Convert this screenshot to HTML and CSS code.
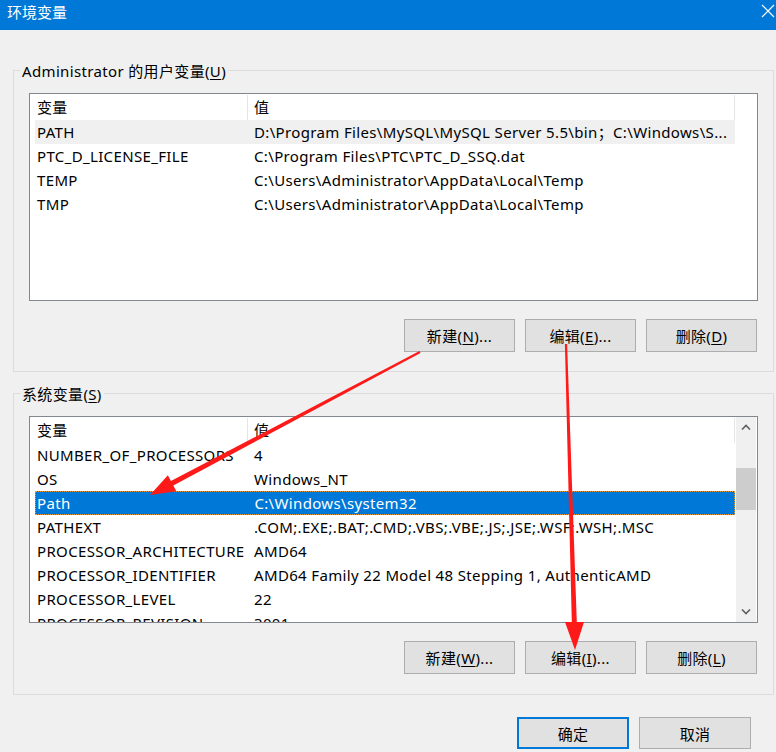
FILE: index.html
```html
<!DOCTYPE html>
<html lang="zh-CN">
<head>
    <meta charset="UTF-8">
    <title>环境变量</title>
    <link rel="stylesheet" href="styles.css">
</head>
<body>
    <div class="titlebar">
        <span class="title">环境变量</span>
        <svg class="close" width="14" height="14" viewBox="0 0 14 14">
            <path d="M1 1 L13 13 M13 1 L1 13" stroke="#fff" stroke-width="1.2" fill="none"/>
        </svg>
    </div>

    <div class="content">
        <!-- user variables -->
        <div class="group user">
            <div class="group-title">Administrator 的用户变量(<u>U</u>)</div>
            <div class="list list-user">
                <div class="rows">
                    <div class="row head">
                        <div class="cell name">变量</div>
                        <div class="cell value">值</div>
                    </div>
                    <div class="row soft">
                        <div class="cell name">PATH</div>
                        <div class="cell value">D:\Program Files\MySQL\MySQL Server 5.5\bin；C:\Windows\S...</div>
                    </div>
                    <div class="row">
                        <div class="cell name">PTC_D_LICENSE_FILE</div>
                        <div class="cell value">C:\Program Files\PTC\PTC_D_SSQ.dat</div>
                    </div>
                    <div class="row">
                        <div class="cell name">TEMP</div>
                        <div class="cell value">C:\Users\Administrator\AppData\Local\Temp</div>
                    </div>
                    <div class="row">
                        <div class="cell name">TMP</div>
                        <div class="cell value">C:\Users\Administrator\AppData\Local\Temp</div>
                    </div>
                </div>
            </div>
            <div class="buttons">
                <button>新建(<u>N</u>)...</button>
                <button>编辑(<u>E</u>)...</button>
                <button>删除(<u>D</u>)</button>
            </div>
        </div>

        <!-- system variables -->
        <div class="group sys">
            <div class="group-title">系统变量(<u>S</u>)</div>
            <div class="list list-sys">
                <div class="rows">
                    <div class="row head">
                        <div class="cell name">变量</div>
                        <div class="cell value">值</div>
                    </div>
                    <div class="row">
                        <div class="cell name">NUMBER_OF_PROCESSORS</div>
                        <div class="cell value">4</div>
                    </div>
                    <div class="row">
                        <div class="cell name">OS</div>
                        <div class="cell value">Windows_NT</div>
                    </div>
                    <div class="row selected">
                        <div class="cell name">Path</div>
                        <div class="cell value">C:\Windows\system32</div>
                    </div>
                    <div class="row">
                        <div class="cell name">PATHEXT</div>
                        <div class="cell value">.COM;.EXE;.BAT;.CMD;.VBS;.VBE;.JS;.JSE;.WSF;.WSH;.MSC</div>
                    </div>
                    <div class="row">
                        <div class="cell name">PROCESSOR_ARCHITECTURE</div>
                        <div class="cell value">AMD64</div>
                    </div>
                    <div class="row">
                        <div class="cell name">PROCESSOR_IDENTIFIER</div>
                        <div class="cell value">AMD64 Family 22 Model 48 Stepping 1, AuthenticAMD</div>
                    </div>
                    <div class="row">
                        <div class="cell name">PROCESSOR_LEVEL</div>
                        <div class="cell value">22</div>
                    </div>
                    <div class="row">
                        <div class="cell name">PROCESSOR_REVISION</div>
                        <div class="cell value">3001</div>
                    </div>
                </div>
                <div class="scrollbar">
                    <div class="sb-btn">
                        <svg width="10" height="6" viewBox="0 0 10 6"><polyline points="1,5.5 5,1.5 9,5.5" fill="none" stroke="#606060" stroke-width="1.6"/></svg>
                    </div>
                    <div class="sb-track">
                        <div class="sb-thumb"></div>
                    </div>
                    <div class="sb-btn">
                        <svg width="10" height="6" viewBox="0 0 10 6"><polyline points="1,0.5 5,4.5 9,0.5" fill="none" stroke="#606060" stroke-width="1.6"/></svg>
                    </div>
                </div>
            </div>
            <div class="buttons">
                <button>新建(<u>W</u>)...</button>
                <button>编辑(<u>I</u>)...</button>
                <button>删除(<u>L</u>)</button>
            </div>
        </div>

        <div class="dialog-buttons">
            <button class="default">确定</button>
            <button>取消</button>
        </div>
    </div>

    <!-- red annotation arrows drawn over the dialog -->
    <svg class="arrows" width="776" height="752" viewBox="0 0 776 752">
        <polygon fill="#ff1a1a" points="419.5,351.1 170.9,481.1 167.9,475.3 150,495 176.3,491.3 173.3,485.5 420.5,352.9"/>
        <polygon fill="#ff1a1a" points="564.9,344 571.8,622 565,622 575,650 584,622 576.8,622 567.1,344"/>
    </svg>
</body>
</html>
```

FILE: styles.css
```css
html, body {
    margin: 0;
    padding: 0;
}

body {
    width: 776px;
    height: 752px;
    overflow: hidden;
    background: #f0f0f0;
    font-family: "Noto Sans", "Noto Sans CJK SC", sans-serif;
    font-size: 15px;
    letter-spacing: 0.35px;
    color: #000;
    position: relative;
}

u {
    text-decoration-thickness: 1px;
    text-underline-offset: 2px;
}

.titlebar {
    height: 30px;
    background: #0078d7;
    color: #fff;
    display: flex;
    justify-content: space-between;
    align-items: flex-start;
    padding: 0 1px 0 7px;
    letter-spacing: 0;
}

.title {
    line-height: 20px;
    padding-top: 2px;
}

.close {
    margin-top: 4px;
}

.content {
    padding: 40px 2px 0 13px;
}

.group {
    border: 1px solid #dcdcdc;
    padding: 0 15px 19px 15px;
}

.group.sys {
    margin-top: 21px;
    padding-bottom: 20px;
}

.group-title {
    width: fit-content;
    margin: -10px 0 0 -9px;
    padding: 0 2px;
    line-height: 20px;
    background: #f0f0f0;
}

.list {
    margin-top: 12px;
    box-sizing: border-box;
    border: 1px solid #828790;
    background: #fff;
    display: flex;
    overflow: hidden;
}

.list-user {
    height: 208px;
}

.list-sys {
    height: 207px;
}

.rows {
    flex: 1;
    padding-left: 5px;
    overflow: hidden;
}

.row {
    display: flex;
    width: 700px;
    height: 24px;
    line-height: 24px;
    box-sizing: border-box;
}

.row.head {
    height: 26px;
    line-height: 26px;
}

.row.soft {
    background: #f0f0f0;
}

.row.selected {
    background: #0078d7;
    color: #fff;
    border: 1px dotted #e89a3c;
    line-height: 22px;
}

.cell {
    white-space: nowrap;
    overflow: hidden;
    box-sizing: border-box;
}

.cell.name {
    width: 213px;
    padding-left: 2px;
}

.cell.value {
    width: 487px;
    padding-left: 6px;
}

.row.selected .cell.name {
    padding-left: 1px;
}

.head .cell {
    border-right: 1px solid #e5e5e5;
    margin: 1px 0 0 0;
    height: 25px;
    line-height: 25px;
}

.scrollbar {
    width: 20px;
    margin-right: 1px;
    background: #f0f0f0;
    display: flex;
    flex-direction: column;
}

.sb-btn {
    height: 20px;
    display: flex;
    align-items: center;
    justify-content: center;
}

.sb-track {
    flex: 1;
    padding-top: 31px;
}

.sb-thumb {
    height: 42px;
    background: #cdcdcd;
}

.buttons {
    display: flex;
    justify-content: flex-end;
    gap: 10px;
    margin: 18px 1px 0 0;
}

button {
    width: 111px;
    height: 33px;
    padding: 0;
    font-family: inherit;
    font-size: 15px;
    letter-spacing: 0.35px;
    color: #000;
    background: #e1e1e1;
    border: 1px solid #adadad;
    border-radius: 0;
}

.dialog-buttons {
    display: flex;
    justify-content: flex-end;
    gap: 10px;
    margin-top: 22px;
    padding-right: 23px;
}

.dialog-buttons button {
    width: 112px;
    height: 32px;
}

button.default {
    border: 2px solid #0078d7;
}

.arrows {
    position: absolute;
    left: 0;
    top: 0;
    pointer-events: none;
}
```
